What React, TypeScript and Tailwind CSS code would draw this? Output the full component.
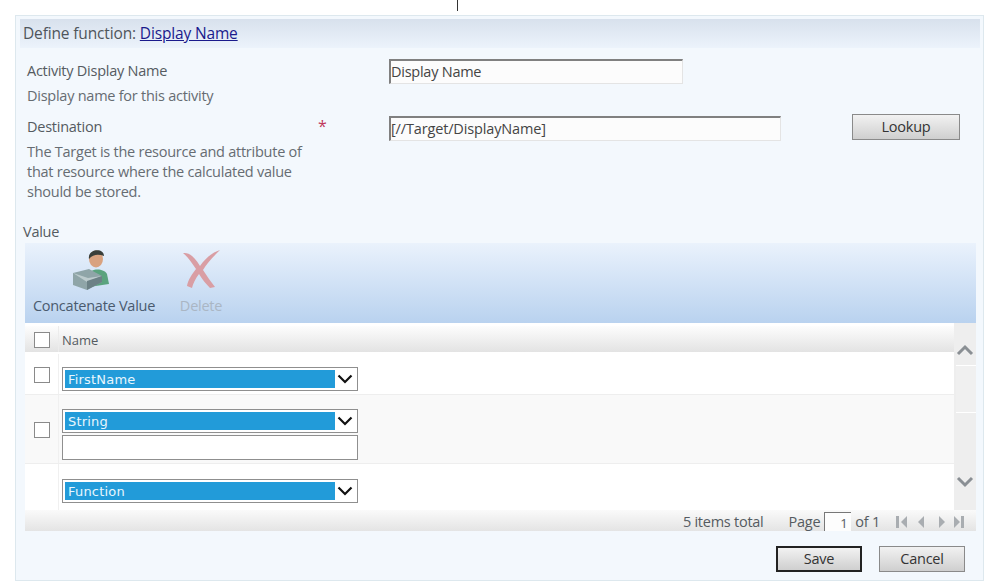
const F = { fontFamily: '"Open Sans", "Noto Sans", sans-serif' };

function Check() {
  return <span className="block w-[16px] h-[16px] border border-[#8a8a8a] bg-white" />;
}

function Select({ label }: { label: string }) {
  return (
    <div className="w-[296px] h-[24px] border border-[#8f8f8f] bg-white p-[2px] flex items-stretch">
      <div className="w-[270px] bg-[#229bd9] text-[#e8f6fd] text-[13px] leading-[19px] pl-[3px] tracking-[0.2px]" style={{ fontFamily: '"DejaVu Sans", sans-serif' }}>
        {label}
      </div>
      <div className="flex-1 flex items-center justify-center">
        <svg width="16" height="10" viewBox="0 0 16 10"><path d="M1.5 1.5 8 8l6.5-6.5" fill="none" stroke="#111" strokeWidth="2.2" /></svg>
      </div>
    </div>
  );
}

function Btn({ label, def, w }: { label: string; def?: boolean; w: string }) {
  return (
    <div className={`${w} h-[26px] flex items-center justify-center text-[14.5px] text-[#333] bg-gradient-to-b from-[#f2f2f2] to-[#cfcfcf] border ${def ? "border-[#222] border-2" : "border-[#8a8a8a]"}`}>
      {label}
    </div>
  );
}

function Pager() {
  return (
    <svg width="72" height="14" viewBox="0 0 72 14" className="ml-[15px]">
      <g fill="#a9adb1">
        <rect x="1" y="1" width="3" height="12" />
        <path d="M12 1v12L6 7z" />
        <path d="M29 1v12l-6-6z" />
      </g>
      <g fill="#a9adb1">
        <path d="M44 1v12l6-6z" />
        <path d="M59 1v12l6-6z" />
        <rect x="66" y="1" width="3" height="12" />
      </g>
    </svg>
  );
}

export default function App() {
  return (
    <div className="w-[999px] h-[587px] bg-white overflow-hidden text-[14.5px] tracking-[-0.25px] text-[#555b61]" style={F}>
      <div className="flex justify-center h-[15px] pr-[84px]"><div className="w-[1px] h-[11px] bg-[#333]" /></div>
      <div className="ml-[15px] w-[969px] h-[566px] border border-[#dde8ee] bg-[#f3f8fd] pt-[3px] pl-[4px] pr-[3px]">
        <div className="h-[29px] pl-[3px] flex items-center bg-gradient-to-b from-[#d8e1ed] to-[#ecf3fb] text-[15.5px] tracking-[-0.15px] text-[#4f555b]">
          <span>Define function:&nbsp;</span>
          <span className="text-[#1a1a8c] underline">Display Name</span>
        </div>

        <div className="flex pt-[11px] h-[154px]">
          <div className="w-[298px] shrink-0 pl-[7px] pt-[2px] leading-[20px]">
            <div>Activity Display Name</div>
            <div className="mt-[5px] text-[#666c72]">Display name for this activity</div>
            <div className="mt-[11px]">Destination</div>
            <div className="mt-[5px] text-[#666c72] w-[290px]">The Target is the resource and attribute of that resource where the calculated value should be stored.</div>
          </div>
          <div className="w-[71px] shrink-0 pt-[57px] text-[#c0395a] text-[16px] leading-[20px]">*</div>
          <div className="w-[463px] shrink-0">
            <div className="w-[294px] h-[25px] border border-[#e4e4e4] border-t-2 border-l-2 border-t-[#808080] border-l-[#808080] bg-[#fcfcfc] leading-[22px] text-[#444]">Display Name</div>
            <div className="mt-[32px] w-[392px] h-[25px] border border-[#e4e4e4] border-t-2 border-l-2 border-t-[#808080] border-l-[#808080] bg-[#fcfcfc] leading-[22px] tracking-[-0.15px] text-[#444]">[//Target/DisplayName]</div>
          </div>
          <div className="pt-[55px]"><Btn label="Lookup" w="w-[108px]" /></div>
        </div>

        <div className="pl-[3px] mt-[20px] h-[19px] leading-[19px]">Value</div>

        <div className="ml-[5px] w-[951px] mt-[2px]">
          <div className="h-[80px] bg-gradient-to-b from-[#eaf2fc] to-[#b9d2ef] flex text-[#4a5a6e]">
            <div className="ml-[8px] w-[122px] shrink-0 flex flex-col items-center">
              <svg width="44" height="44" viewBox="0 0 44 44" className="mt-[5px] mr-[6px] shrink-0">
                <path d="M19 26c3-6 16-6 19 0l2 10-20 3z" fill="#5aa37e" />
                <ellipse cx="27" cy="11" rx="7" ry="8.5" fill="#d9a27f" />
                <path d="M20 11c-2-10 15-12 15-3-5-2-11-2-15 3z" fill="#3a3f3a" />
                <path d="M4 25l16-4 13 7v6l-15 8-14-5z" fill="#8fa5a8" />
                <path d="M4 25l15 5 14-2-15 6z" fill="#bccbcd" />
                <path d="M18 33v9l15-8v-6z" fill="#6c8186" />
              </svg>
              <div className="mt-[4px] leading-[20px] whitespace-nowrap">Concatenate Value</div>
            </div>
            <div className="ml-[25px] w-[42px] shrink-0 flex flex-col items-center">
              <svg width="40" height="44" viewBox="0 0 40 44" className="mt-[5px] shrink-0">
                <path d="M2 5c7-1 12 5 17 13C24 11 30 5 39 2 32 9 26 15 22 22c4 6 8 12 12 17l-5 1c-4-4-8-9-11-14-4 5-6 10-7 14l-5-2c1-6 5-12 9-17C11 15 7 9 2 5z" fill="#d99ea4" />
              </svg>
              <div className="mt-[4px] leading-[20px] text-[#aab6c4]">Delete</div>
            </div>
          </div>

          <div className="flex bg-[#f0f0f0] h-[187px]">
            <div className="w-[929px] bg-white">
              <div className="h-[26px] mt-[3px] flex items-center bg-gradient-to-b from-[#fdfdfd] to-[#e3e3e3]">
                <div className="w-[33px] pl-[9px] pt-[2px]"><Check /></div>
                <div className="pl-[3px] pt-[3px] text-[13px] tracking-normal border-l border-[#ececec] h-full flex items-center">Name</div>
              </div>
              <div className="h-[41px] mt-[2px] flex border-b border-[#eeeeee]">
                <div className="w-[33px] pl-[9px] pt-[13px]"><Check /></div>
                <div className="pl-[3px] pb-[3px] border-l border-[#f0f0f0] h-full flex items-end"><Select label="FirstName" /></div>
              </div>
              <div className="h-[69px] flex items-center bg-[#f9f9f9] border-b border-[#eeeeee]">
                <div className="w-[33px] pl-[9px] pt-[2px]"><Check /></div>
                <div className="pl-[3px] pb-[3px] border-l border-[#f0f0f0] h-full flex flex-col justify-end gap-[2px]">
                  <Select label="String" />
                  <div className="w-[296px] h-[25px] border border-[#8f8f8f] bg-white" />
                </div>
              </div>
              <div className="h-[46px] flex items-center">
                <div className="w-[33px]" />
                <div className="pl-[3px] pb-[7px] border-l border-[#f0f0f0] h-full flex items-end"><Select label="Function" /></div>
              </div>
            </div>
            <div className="flex-1 flex flex-col items-center bg-[#eeeeee] min-w-0">
              <svg width="18" height="12" viewBox="0 0 18 12" className="mt-[21px] shrink-0"><path d="M2 10l7-7 7 7" fill="none" stroke="#8a8f94" strokeWidth="3" /></svg>
              <div className="mt-[9px] w-[20px] self-end h-[48px] border-y border-white bg-[#f0f0f0] shrink-0" />
              <svg width="18" height="12" viewBox="0 0 18 12" className="mt-[63px] shrink-0"><path d="M2 2l7 7 7-7" fill="none" stroke="#8a8f94" strokeWidth="3" /></svg>
            </div>
          </div>

          <div className="h-[21px] pt-[2px] bg-gradient-to-b from-[#fafafa] to-[#e4e4e4] flex items-center justify-end pr-[9px]">
            <span>5 items total</span>
            <span className="ml-[25px]">Page</span>
            <span className="ml-[4px] w-[27px] h-[19px] border-l border-t border-[#777] bg-[#fdfdfd] text-right pr-[4px] text-[13px] leading-[20px]">1</span>
            <span className="ml-[4px]">of 1</span>
            <Pager />
          </div>
        </div>

        <div className="flex justify-end mt-[15px] pr-[15px] gap-[17px]">
          <Btn label="Save" def w="w-[86px]" />
          <Btn label="Cancel" w="w-[86px]" />
        </div>
      </div>
    </div>
  );
}
